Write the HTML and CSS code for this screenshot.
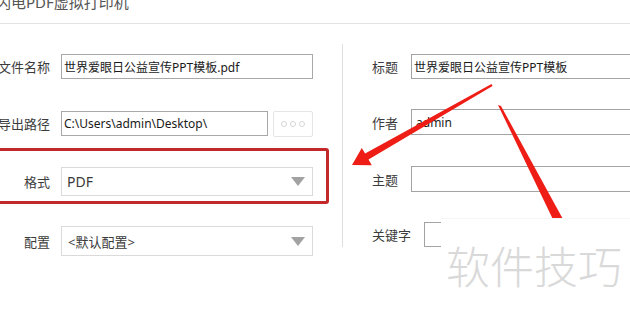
FILE: index.html
```html
<!DOCTYPE html>
<html lang="zh-CN">
<head>
    <meta charset="UTF-8">
    <title>闪电PDF虚拟打印机</title>
    <link rel="stylesheet" href="styles.css">
</head>
<body>
    <div class="window">
        <header class="titlebar">
            <h1>闪电PDF虚拟打印机</h1>
        </header>

        <main class="content">
            <section class="col-left">
                <div class="row row-name">
                    <label class="label">文件名称</label>
                    <input type="text" class="field" value="世界爱眼日公益宣传PPT模板.pdf">
                </div>
                <div class="row row-path">
                    <label class="label">导出路径</label>
                    <input type="text" class="field field-path" value="C:\Users\admin\Desktop\">
                    <button type="button" class="browse">
                        <svg width="26" height="8" viewBox="0 0 26 8">
                            <circle cx="4" cy="4" r="2.5"/>
                            <circle cx="13" cy="4" r="2.5"/>
                            <circle cx="22" cy="4" r="2.5"/>
                        </svg>
                    </button>
                </div>
                <div class="row row-format">
                    <label class="label">格式</label>
                    <div class="select select-format"><span>PDF</span><i class="caret"></i></div>
                </div>
                <div class="row row-config">
                    <label class="label">配置</label>
                    <div class="select"><span>&lt;默认配置&gt;</span><i class="caret"></i></div>
                </div>
            </section>

            <section class="col-right">
                <div class="row row-title">
                    <label class="label">标题</label>
                    <input type="text" class="field field-wide" value="世界爱眼日公益宣传PPT模板">
                </div>
                <div class="row row-author">
                    <label class="label">作者</label>
                    <input type="text" class="field field-wide field-author" value="admin">
                </div>
                <div class="row row-subject">
                    <label class="label">主题</label>
                    <input type="text" class="field field-wide" value="">
                </div>
                <div class="row row-keys">
                    <label class="label">关键字</label>
                    <input type="text" class="field field-wide" value="">
                </div>
            </section>
        </main>

        <!-- annotations drawn over the screenshot -->
        <div class="highlight"></div>
        <svg class="arrows" width="630" height="316" viewBox="0 0 630 316">
            <polygon points="491.5,84.1 365.1,153.6 361.8,147.9 352,165 371.8,165.3 368.5,159.6 492.5,85.9"/>
            <polygon points="498,105 501,106 570,232 559,232"/>
        </svg>
        <div class="watermark">软件技巧</div>
    </div>
</body>
</html>
```

FILE: styles.css
```css
html, body {
    margin: 0;
    padding: 0;
    overflow: hidden;
    background-color: #fff;
}

body {
    font-family: "Noto Sans", "Noto Sans CJK SC", sans-serif;
    color: #3c3c3c;
}

.window {
    position: relative;
    width: 630px;
    height: 316px;
    overflow: hidden;
}

.titlebar {
    height: 23px;
    border-bottom: 1px solid #e3e3e3;
    overflow: hidden;
}

.titlebar h1 {
    margin: -8px 0 0 -4px;
    font-size: 15px;
    line-height: 20px;
    font-weight: normal;
    color: #555;
    white-space: nowrap;
}

.content {
    display: flex;
    align-items: flex-start;
    padding-top: 20px;
}

.col-left {
    flex: 0 0 342px;
    padding-top: 10px;
}

.col-right {
    flex: 1;
    border-left: 1px solid #dedede;
    padding: 10px 0 0 29px;
}

.row {
    display: flex;
    align-items: center;
}

.label {
    font-size: 13px;
    white-space: nowrap;
    flex-shrink: 0;
}

.col-left .label {
    display: flex;
    justify-content: flex-end;
    width: 50px;
    margin-right: 11px;
}

.col-right .label {
    margin-right: 13px;
}

.field {
    box-sizing: border-box;
    height: 100%;
    margin: 0;
    padding: 0 2px;
    border: 1px solid #a8a8a8;
    border-radius: 0;
    font-family: "Noto Sans", "Noto Sans CJK SC", sans-serif;
    font-size: 12px;
    color: #1a1a1a;
    outline: none;
    width: 252px;
}

.field-path {
    width: 207px;
}

.field-wide {
    width: 250px;
    flex-shrink: 0;
    border-color: #a3a3a3;
}

.field-author {
    padding-left: 4px;
}

.browse {
    box-sizing: border-box;
    width: 40px;
    height: 26px;
    margin-left: 5px;
    padding: 0;
    border: 1px solid #e6e6e6;
    border-radius: 2px;
    background-color: #fff;
    display: flex;
    align-items: center;
    justify-content: center;
}

.browse circle {
    fill: none;
    stroke: #d6d6d6;
    stroke-width: 1;
}

.select {
    box-sizing: border-box;
    width: 252px;
    height: 100%;
    border: 1px solid #dadada;
    display: flex;
    align-items: center;
    justify-content: space-between;
    padding: 0 7px 0 6px;
    font-size: 13px;
    color: #3a3a3a;
}

.select-format {
    font-size: 14px;
    padding-left: 5px;
}

.caret {
    width: 0;
    height: 0;
    border-left: 7.5px solid transparent;
    border-right: 7.5px solid transparent;
    border-top: 9px solid #a2a2a2;
}

/* left column rows */
.row-name { height: 25px; }
.row-path { height: 25px; margin-top: 32px; }
.row-format { height: 29px; margin-top: 31px; }
.row-config { height: 30px; margin-top: 30px; }

/* right column rows */
.row-title { height: 25px; }
.row-author { height: 26px; margin-top: 30px; }
.row-subject { height: 26px; margin-top: 31px; }
.row-keys { height: 25px; margin-top: 30px; }

/* annotations */
.highlight {
    position: absolute;
    left: -10px;
    top: 148px;
    width: 333px;
    height: 50px;
    border: 3px solid #c3282a;
    border-radius: 3px;
}

.arrows {
    position: absolute;
    left: 0;
    top: 0;
}

.arrows polygon {
    fill: #ee1d16;
}

.watermark {
    position: absolute;
    left: 441px;
    top: 218px;
    right: 0;
    bottom: 0;
    background-color: #fff;
    border-top: 1px solid #f6f6f6;
    padding: 24px 0 0 5px;
    font-family: "Noto Sans CJK SC", sans-serif;
    font-weight: 300;
    font-size: 44px;
    line-height: 1;
    color: #d9d9d9;
    white-space: nowrap;
}
```
